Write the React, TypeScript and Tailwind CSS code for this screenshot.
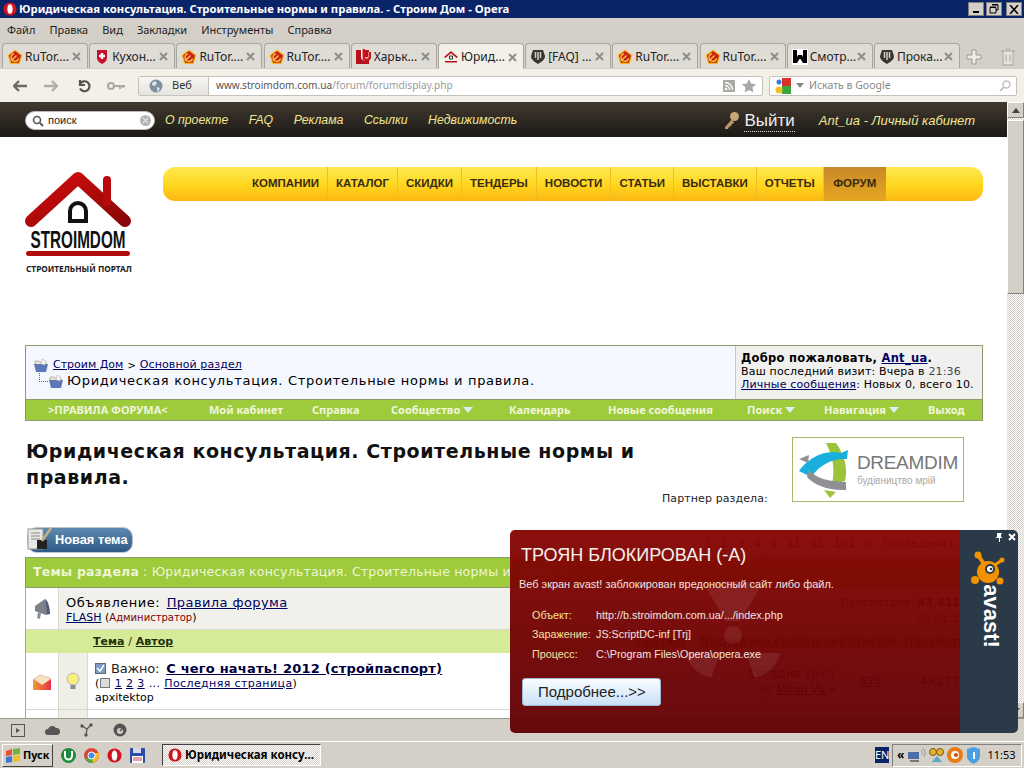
import React from "react";

const RuTor = () => (
  <svg width="16" height="16" viewBox="0 0 16 16" className="shrink-0">
    <path d="M8 .5l7.500 5.500-2.800 9H3.300L.5 6z" fill="#f2b820" />
    <path d="M8 2l6 4.500-2.200 7.200H4.200L2 6.500z" fill="#c8201a" />
    <path d="M5 11l4.500-4.500M7 4.800a3.800 3.800 0 1 0 4.500 4.700" stroke="#f6cf3a" strokeWidth="1.300" fill="none" />
  </svg>
);
const Shield = () => (
  <svg width="16" height="16" viewBox="0 0 16 16" className="shrink-0">
    <path d="M3 1h10v8c0 3-3 5-5 6-2-1-5-3-5-6z" fill="#c8102e" />
    <path d="M6.800 4h2.400v1.800H11v2.400H9.200V10H6.800V8.200H5V5.800h1.800z" fill="#fff" />
  </svg>
);
const RedU = () => (
  <svg width="16" height="16" viewBox="0 0 16 16" className="shrink-0">
    <rect x="0" y="1" width="13" height="14" fill="#b5121b" />
    <path d="M5 0h4v7c0 2 3 2 3 0V3h3v5c0 5-10 5-10 0z" fill="#fff" />
    <path d="M6.500 0h2.500v8c0 2 3 2 3.500 0V3H15v5c0 4-4 5-6 4-2-.7-2.500-2-2.500-4z" fill="#c8151f" />
  </svg>
);
const HouseFav = () => (
  <svg width="16" height="16" viewBox="0 0 16 16" className="shrink-0">
    <path d="M1 8l7-6 7 6-1.400 1L8 4.200 2.400 9z" fill="#b8141c" />
    <path d="M6.500 7h3v3h-3z" fill="none" stroke="#333" />
    <path d="M2 12h12v1.500H2z" fill="#b8141c" />
  </svg>
);
const Wot = () => (
  <svg width="16" height="16" viewBox="0 0 16 16" className="shrink-0">
    <path d="M3 1h10l2 6c0 4-4 6-7 8-3-2-7-4-7-8z" fill="#37372f" />
    <path d="M5.500 3v6M8 3v8M10.500 3v6" stroke="#cfcfc4" strokeWidth="1.500" />
  </svg>
);
const WFav = () => (
  <span className="w-4 h-4 bg-white flex items-center justify-center shrink-0">
    <svg width="14" height="13" viewBox="0 0 14 13"><path d="M0 0h4v7l1-2h4l1 2V0h4v13h-4L7.500 9h-1L4 13H0z" fill="#000" /></svg>
  </span>
);
const OperaO = ({ s = 14 }: { s?: number }) => (
  <svg width={s} height={s} viewBox="0 0 16 16" className="shrink-0">
    <ellipse cx="8" cy="8" rx="7.500" ry="7.500" fill="#d0131c" />
    <ellipse cx="8" cy="8" rx="3" ry="5.500" fill="#fff" />
  </svg>
);
const CloseX = () => (
  <svg width="9" height="9" viewBox="0 0 9 9" className="shrink-0"><path d="M1 1l7 7M8 1L1 8" stroke="#8d8d8a" strokeWidth="2" /></svg>
);
const Folder = () => (
  <svg width="16" height="15" viewBox="0 0 16 15" className="shrink-0">
    <path d="M2 3h4l1 1h6v3H2z" fill="#e8e4d0" stroke="#8a8a7a" strokeWidth=".5" />
    <path d="M1 6h14l-2 8H3z" fill="#5c78b8" />
    <path d="M9 1l4 2-1 4-4-1z" fill="#f4f4f4" stroke="#999" strokeWidth=".4" />
  </svg>
);
const Tri = () => (
  <svg width="10" height="6" viewBox="0 0 10 6" className="shrink-0"><path d="M0 0h10L5 6z" fill="#dcebf8" /></svg>
);

const tabs: [React.ReactNode, string, boolean?][] = [
  [<RuTor />, "RuTor...."],
  [<Shield />, "Кухон..."],
  [<RuTor />, "RuTor...."],
  [<RuTor />, "RuTor...."],
  [<RedU />, "Харьк..."],
  [<HouseFav />, "Юрид...", true],
  [<Wot />, "[FAQ] ..."],
  [<RuTor />, "RuTor...."],
  [<RuTor />, "RuTor...."],
  [<WFav />, "Смотр..."],
  [<Wot />, "Прока..."],
];

const uiFont = "font-['Noto_Sans','DejaVu_Sans',sans-serif]";
const verdana = "font-['DejaVu_Sans',sans-serif]";
const arial = "font-['Liberation_Sans',Arial,sans-serif]";

function TitleBar() {
  return (
    <div className={`h-[18px] bg-[#0a246a] flex items-center pl-[3px] pr-[2px] text-white font-bold ${uiFont}`}>
      <OperaO />
      <span className="ml-[2px] text-[11.300px] leading-none">Юридическая консультация. Строительные нормы и правила. - Строим Дом - Opera</span>
      <div className="ml-auto flex gap-[2px]">
        <span className="w-[16px] h-[14px] bg-[#d4d0c8] border border-[#808080] flex items-end justify-center pb-[2px]"><span className="w-[6px] h-[2px] bg-black" /></span>
        <span className="w-[16px] h-[14px] bg-[#d4d0c8] border border-[#808080] flex items-center justify-center">
          <svg width="10" height="10" viewBox="0 0 10 10"><path d="M3 1h6v5H7M1 3.500h6V9H1z" fill="none" stroke="#000" /><path d="M3 .5h6M1 3h6" stroke="#000" /></svg>
        </span>
        <span className="ml-[2px] w-[16px] h-[14px] bg-[#d4d0c8] border border-[#808080] flex items-center justify-center">
          <svg width="10" height="9" viewBox="0 0 10 9"><path d="M1 0l8 9M9 0L1 9" stroke="#000" strokeWidth="1.500" /></svg>
        </span>
      </div>
    </div>
  );
}

function MenuBar() {
  return (
    <div className={`h-[25px] bg-[#d4d0c8] flex items-center pl-[7px] gap-[14px] text-[11px] text-[#222] ${uiFont}`}>
      {["Файл", "Правка", "Вид", "Закладки", "Инструменты", "Справка"].map((m) => <span key={m}>{m}</span>)}
    </div>
  );
}

function TabStrip() {
  return (
    <div className={`h-[26px] bg-[#d4d0c8] flex items-end pl-[2px] text-[12px] text-[#222] ${uiFont}`}>
      <div className="flex gap-[1.200px]">
        {tabs.map(([ic, t, a], i) => (
          <div key={i} className={`w-[86px] flex items-center pl-[4px] pr-[6px] pt-[1px] rounded-t-[4px] border border-[#a9a69e] border-b-0 ${a ? "h-[26px] bg-[#f3f0e8]" : "h-[25px] bg-[#dfdcd5]"}`}>
            {ic}
            <span className="ml-[2px] flex-1 whitespace-nowrap overflow-hidden">{t}</span>
            <CloseX />
          </div>
        ))}
      </div>
      <svg width="18" height="18" viewBox="0 0 18 18" className="ml-[5px] mb-[3px]"><path d="M7 2h4v5h5v4h-5v5H7v-5H2V7h5z" fill="#efece5" stroke="#9d9a92" /></svg>
      <svg width="16" height="18" viewBox="0 0 16 18" className="ml-[17px] mb-[3px]"><path d="M1 3h14M3 3v14h10V3M6 1h4M6 7v7M10 7v7" fill="#e6e3dc" stroke="#a9a69e" /></svg>
    </div>
  );
}

function AddressBar() {
  return (
    <div className={`h-[33px] bg-[#f3f0e8] flex items-center text-[11px] ${uiFont}`}>
      <svg width="14" height="12" viewBox="0 0 14 12" className="ml-[13px]"><path d="M6 1L1 6l5 5M2 6h12" fill="none" stroke="#6b6b66" strokeWidth="2.400" /></svg>
      <svg width="14" height="12" viewBox="0 0 14 12" className="ml-[17px]"><path d="M8 1l5 5-5 5M12 6H0" fill="none" stroke="#b0aea8" strokeWidth="2.400" /></svg>
      <svg width="14" height="14" viewBox="0 0 14 14" className="ml-[20px]"><path d="M2 5a5 5 0 1 1 0 4.500M2 1v5h5" fill="none" stroke="#55534e" strokeWidth="2.200" /></svg>
      <svg width="18" height="10" viewBox="0 0 18 10" className="ml-[15px]"><circle cx="4" cy="5" r="3" fill="none" stroke="#aaa8a2" strokeWidth="2" /><path d="M7 5h11M13 5v3M16 5v2" stroke="#aaa8a2" strokeWidth="2" /></svg>
      <div className="ml-[13px] w-[625px] h-[20px] bg-white border border-[#c4c2bb] rounded-[2px] flex items-center">
        <div className="w-[70px] h-full bg-gradient-to-b from-[#f7f6f3] to-[#e6e4de] border-r border-[#c4c2bb] flex items-center pl-[10px] gap-[9px] text-[#333]">
          <svg width="14" height="14" viewBox="0 0 14 14"><circle cx="7" cy="7" r="6.500" fill="#7f8fa3" /><path d="M3 4l3-2 2 2-2 3-3-1zM8 8l3 1-2 4-1-2z" fill="#dfe5ea" /></svg>
          <span>Веб</span>
        </div>
        <span className="ml-[7px] text-[10.100px]"><span className="text-[#555]">www.stroimdom.com.ua</span><span className="text-[#999]">/forum/forumdisplay.php</span></span>
        <svg width="12" height="12" viewBox="0 0 12 12" className="ml-auto"><rect width="12" height="12" fill="#a8a8a4" /><circle cx="3" cy="9" r="1.300" fill="#fff" /><path d="M2 5.500a4.500 4.500 0 0 1 4.500 4.500M2 2.500A7.500 7.500 0 0 1 9.500 10" stroke="#fff" strokeWidth="1.300" fill="none" /></svg>
        <svg width="14" height="14" viewBox="0 0 14 14" className="ml-[7px] mr-[6px]"><path d="M7 0l2.100 4.600 4.900.6-3.600 3.300 1 4.900L7 11l-4.400 2.400 1-4.900L0 5.200l4.900-.6z" fill="#a8a8a4" /></svg>
      </div>
      <div className="ml-[6px] w-[248px] h-[20px] bg-white border border-[#c4c2bb] rounded-[2px] flex items-center text-[#888] text-[10.500px]">
        <svg width="16" height="16" viewBox="0 0 16 16" className="ml-[5px]"><rect x="7" y="0" width="9" height="8" fill="#d8322a" /><rect x="7" y="8" width="9" height="8" fill="#3aa63f" /><circle cx="4" cy="4" r="2.500" fill="#3b78d8" /><ellipse cx="4" cy="12" rx="3.500" ry="3.500" fill="#f3c021" /></svg>
        <svg width="8" height="5" viewBox="0 0 8 5" className="ml-[5px]"><path d="M0 0h8L4 5z" fill="#888" /></svg>
        <span className="ml-[5px]">Искать в Google</span>
        <svg width="12" height="12" viewBox="0 0 12 12" className="ml-auto mr-[5px]"><circle cx="7.500" cy="4.500" r="3.500" fill="none" stroke="#c6c4be" strokeWidth="1.500" /><path d="M5 7l-4 4" stroke="#c6c4be" strokeWidth="2" /></svg>
      </div>
    </div>
  );
}

function DarkHeader() {
  return (
    <div className={`h-[35px] pt-[2px] bg-gradient-to-b from-[#413a30] to-[#1c1916] flex items-center pl-[25px] pr-[32px] italic text-[12.300px] text-[#f2e690] ${arial}`}>
      <div className="w-[130px] h-[19px] bg-white rounded-full border border-[#bbb] flex items-center pl-[6px] not-italic text-[#222] text-[11px]">
        <svg width="12" height="12" viewBox="0 0 12 12"><circle cx="5" cy="5" r="3.500" fill="none" stroke="#555" strokeWidth="1.600" /><path d="M8 8l3 3" stroke="#555" strokeWidth="2" /></svg>
        <span className="ml-[4px]">поиск</span>
        <span className="ml-auto mr-[3px] w-[11px] h-[11px] rounded-full bg-[#b5b5b5] text-white flex items-center justify-center">
          <svg width="5" height="5" viewBox="0 0 5 5"><path d="M0 0l5 5M5 0L0 5" stroke="#fff" /></svg>
        </span>
      </div>
      <div className="ml-[10px] flex gap-[20.500px]">
        {["О проекте", "FAQ", "Реклама", "Ссылки", "Недвижимость"].map((l) => <span key={l}>{l}</span>)}
      </div>
      <svg width="17" height="19" viewBox="0 0 17 19" className="ml-auto"><circle cx="11.500" cy="5.500" r="4.500" fill="#c9a676" /><path d="M9 8l-7 8v2h3l1-2 2-1 1-2 2-1z" fill="#b8956a" /></svg>
      <span className="ml-[4px] not-italic text-[17px] text-[#eee] border-b border-dotted border-[#ddd] leading-[21px]">Выйти</span>
      <span className="ml-[24px] text-[13px]">Ant_ua - Личный кабинет</span>
    </div>
  );
}

function Logo() {
  return (
    <div className="w-[138px] pt-[35px]">
      <svg width="108" height="86" viewBox="0 0 108 86" className="block overflow-visible">
        <defs>
          <linearGradient id="roof" x1="0" x2="1" y1="0" y2="1"><stop offset="0" stopColor="#d40d0d" /><stop offset="1" stopColor="#8a0606" /></linearGradient>
        </defs>
        <path d="M6 49L53 6l47 43" fill="none" stroke="url(#roof)" strokeWidth="12" strokeLinecap="round" strokeLinejoin="round" />
        <path d="M82 30V8" stroke="#b80a0a" strokeWidth="8" strokeLinecap="round" />
        <path d="M43 51V39a10 10 0 0 1 20 0v12zM47 47h12V39a6 6 0 0 0-12 0z" fill="#111" fillRule="evenodd" />
        <text x="53" y="76" textAnchor="middle" textLength="95" lengthAdjust="spacingAndGlyphs" fontFamily="'Liberation Sans Narrow', 'Liberation Sans', sans-serif" fontWeight="700" fontSize="23" fill="#111">STROIMDOM</text>
        <rect x="1" y="79" width="104" height="5" rx="2.500" fill="#b10c0c" />
      </svg>
      <div className={`ml-[1px] mt-[5px] w-[106px] text-[8.300px] font-bold leading-[11px] text-[#222] whitespace-nowrap ${uiFont}`}>СТРОИТЕЛЬНЫЙ ПОРТАЛ</div>
    </div>
  );
}

function YellowNav() {
  const items = ["КОМПАНИИ", "КАТАЛОГ", "СКИДКИ", "ТЕНДЕРЫ", "НОВОСТИ", "СТАТЬИ", "ВЫСТАВКИ", "ОТЧЕТЫ"];
  return (
    <div className={`flex-1 mt-[30px] h-[34px] rounded-[12px] bg-gradient-to-b from-[#ffe94f] via-[#ffd81f] to-[#fcb714] flex pl-[81px] text-[11.500px] font-bold text-[#3b2a10] ${arial}`}>
      {items.map((t) => (
        <span key={t} className="px-[8px] flex items-center border-r border-[#f2bd1f]">{t}</span>
      ))}
      <span className="w-[62px] flex items-center justify-center bg-gradient-to-b from-[#c8882a] to-[#e6a81f]">ФОРУМ</span>
    </div>
  );
}

function Breadcrumb() {
  const links: [string, string, boolean?][] = [
    [">ПРАВИЛА ФОРУМА<", "w-[161px]"],
    ["Мой кабинет", "w-[103px]"],
    ["Справка", "w-[79px]"],
    ["Сообщество", "w-[118px]", true],
    ["Календарь", "w-[99px]"],
    ["Новые сообщения", "w-[139px]"],
    ["Поиск", "w-[77px]", true],
    ["Навигация", "w-[104px]", true],
    ["Выход", "w-[40px]"],
  ];
  return (
    <div className={`border border-[#8d9a6e] ${verdana} text-[11px] text-black`}>
      <div className="h-[53px] flex">
        <div className="flex-1 bg-[#f5f7ff] pt-[12px] pl-[7px]">
          <div className="flex items-center h-[14px]">
            <Folder />
            <span className="ml-[4px] underline text-[#000060]">Строим Дом</span>
            <span className="mx-[4px] text-[10px]">&gt;</span>
            <span className="underline text-[#000060] tracking-[.1px]">Основной раздел</span>
          </div>
          <div className="flex items-center h-[16px] ml-[6px] mt-[1px]">
            <span className="w-[9px] h-[9px] -mt-[8px] border-l border-b border-dotted border-[#666]" />
            <Folder />
            <span className="ml-[3px] text-[13px] tracking-[.7px] font-medium">Юридическая консультация. Строительные нормы и правила.</span>
          </div>
        </div>
        <div className="w-[247px] bg-[#f0f0ee] border-l border-[#c8c8c0] pl-[5px] pt-[6px] leading-[13px] tracking-[.17px]">
          <div className="font-bold text-[11.500px] tracking-[.3px] whitespace-nowrap">Добро пожаловать, <span className="underline text-[#000060]">Ant_ua</span>.</div>
          <div className="whitespace-nowrap">Ваш последний визит: Вчера в <span className="text-[#445]">21:36</span></div>
          <div className="whitespace-nowrap"><span className="underline text-[#000060]">Личные сообщения</span>: Новых 0, всего 10.</div>
        </div>
      </div>
      <div className={`h-[21px] bg-[#9ecb3c] border-t border-[#8d9a6e] flex items-center pl-[22px] text-[11px] font-bold text-[#f0f6dc] ${uiFont}`}>
        {links.map(([t, w, d]) => (
          <span key={t} className={`${w} shrink-0 flex items-center gap-[3px] whitespace-nowrap`}>{t}{d && <Tri />}</span>
        ))}
      </div>
    </div>
  );
}

function Partner() {
  return (
    <div className="flex h-[107px] pt-[16px]">
      <h1 className={`w-[636px] ml-[1px] mt-[1px] text-[19px] font-bold leading-[26px] tracking-[.57px] text-[#111] ${verdana}`}>
        Юридическая консультация. Строительные нормы и правила.
      </h1>
      <div className={`self-start mt-[54px] text-[11px] tracking-[.1px] text-[#222] whitespace-nowrap ${verdana}`}>Партнер раздела:</div>
      <div className="ml-[24px] w-[172px] h-[65px] border border-[#a8b868] flex items-center pl-[6px]">
        <svg width="50" height="58" viewBox="0 0 50 58" className="shrink-0">
          <path d="M27 2l10 0c9 13 12 26 9 38l-13 3c3-15 1-28-6-41z" fill="#9cc43a" />
          <path d="M49 9l-1 9C36 17 22 22 12 36L0 30C8 18 25 8 42 12z" fill="#1ab0dd" />
          <path d="M10 29c8 9 18 11 37 12v8C30 50 15 44 8 36z" fill="#8f8f96" />
          <path d="M0 18l10-4-1 8z" fill="#8f8f96" />
          <path d="M25 49l12 2-6 6z" fill="#9cc43a" />
        </svg>
        <div className={`ml-[8px] ${arial}`}>
          <div className="text-[19px] leading-[22px] text-[#777] tracking-[-.3px]">DREAMDIM</div>
          <div className="text-[10px] leading-[13px] text-[#aaa]">будівництво мрій</div>
        </div>
      </div>
    </div>
  );
}

function ActionRow() {
  return (
    <div className={`h-[29px] flex ${verdana}`}>
      <div className={`ml-[2px] mt-[-1px] w-[106px] h-[26px] rounded-[10px] bg-gradient-to-b from-[#5e8ab0] to-[#2d5a85] border border-[#b8c4cc] flex items-center pl-[27px] text-[12.800px] font-bold text-white relative ${arial}`}>
        <svg width="28" height="28" viewBox="0 0 28 28" className="absolute -left-[2px] -top-[2px]"><rect x="2" y="3" width="15" height="20" fill="#e8e8e4" stroke="#999" /><path d="M5 7h9M5 10h9M5 13h9" stroke="#888" /><rect x="11" y="14" width="10" height="9" fill="#222" /><path d="M16 15L25 2" stroke="#c8b080" strokeWidth="2.500" /></svg>
        Новая тема
      </div>
      <div className="ml-auto mt-[8px] mr-[27px] flex gap-[9.500px] text-[11px] text-black whitespace-nowrap">
        <span>1</span><span>2</span><span>3</span><span>4</span><span>5</span><span>11</span><span>51</span><span>101</span><span>&gt;</span><span>Последняя »</span>
      </div>
    </div>
  );
}

function ThreadTable() {
  return (
    <div className={`border-x border-[#a8a8a0] ${verdana} text-[11px] text-black`}>
      <div className="h-[31px] bg-[#9ecb3c] border border-[#8d9a6e] -mx-[1px] flex items-center pl-[7px] text-[12.500px] text-[#eef6d8] tracking-[.2px] whitespace-nowrap overflow-hidden">
        <b>Темы раздела</b><span className="ml-[4px]">: Юридическая консультация. Строительные нормы и правила.</span>
      </div>
      <div className="h-[42px] flex border-b border-[#d8d8d0]">
        <div className="w-[33px] bg-white border-r border-[#d8d8d0] flex items-center justify-center">
          <svg width="18" height="22" viewBox="0 0 18 22"><path d="M12 1l5 15-4 1-8-3-3-1 0-5z" fill="#7c8088" /><path d="M12 1c3 1 5 9 5 15l-3 0c0-5-1-11-2-15z" fill="#4a5a80" /><path d="M5 14l-1 6 3 1 1-6z" fill="#8c909a" /></svg>
        </div>
        <div className="flex-1 bg-[#f1f1ec] pl-[7px] pt-[7px] pr-[22px] flex">
          <div>
            <div className="text-[13px] leading-[16px]"><span className="font-medium tracking-[.5px]">Объявление</span>: <span className="ml-[3px] tracking-[.4px] underline text-[#000060]">Правила форума</span></div>
            <div className="text-[11px] leading-[14px]"><span className="underline text-[#000060]">FLASH</span> (<span className="text-[#800000] text-[10px]">Администратор</span>)</div>
          </div>
          <div className="ml-auto text-right leading-[16px] whitespace-nowrap">
            <div>Просмотров: <b>83,411</b></div>
            <div className="-mr-[20px]">20.01.2012</div>
          </div>
        </div>
      </div>
      <div className="h-[23px] pt-[2px] bg-[#d6eb98] flex items-center pl-[67px] font-bold text-[#22300a] text-[11px]">
        <span><span className="underline">Тема</span> <span className="font-normal">/</span> <span className="underline">Автор</span></span>
        <span className="ml-auto w-[64px] underline">Рейтинг</span>
        <span className="underline w-[146px] whitespace-nowrap overflow-hidden">Последнее сообщение</span>
        <span className="underline w-[58px]">Ответов</span>
        <span className="underline w-[78px] whitespace-nowrap overflow-hidden">Просмотров</span>
      </div>
      <div className="h-[57px] flex border-b border-[#d8d8d0]">
        <div className="w-[33px] bg-white border-r border-[#d8d8d0] flex items-center justify-center">
          <svg width="20" height="20" viewBox="0 0 20 20"><path d="M2 8l6-4 10 3-1 5-6 3z" fill="#f6e4c0" stroke="#b88" strokeWidth=".5" /><path d="M1 8l9 6 9-6v11H1z" fill="url(#env)" /><defs><linearGradient id="env" x1="0" x2="1"><stop offset="0" stopColor="#f29a30" /><stop offset="1" stopColor="#e8304a" /></linearGradient></defs></svg>
        </div>
        <div className="w-[29px] bg-[#efefe8] border-r border-[#d8d8d0] flex items-center justify-center">
          <svg width="14" height="18" viewBox="0 0 14 18"><circle cx="7" cy="7" r="6" fill="#f7ee7c" stroke="#b4b4c0" /><rect x="4.500" y="13" width="5" height="4" fill="#8d8d90" /></svg>
        </div>
        <div className="flex-1 bg-white pl-[7px] pt-[7px] flex">
          <div>
            <div className="text-[13px] leading-[17px] flex items-center whitespace-nowrap tracking-[.2px]">
              <span className="w-[11px] h-[11px] bg-[#7e9cc8] border border-[#667] flex items-center justify-center"><svg width="9" height="9" viewBox="0 0 9 9"><path d="M1 4l3 3 4-6" fill="none" stroke="#fff" strokeWidth="1.500" /></svg></span>
              <span className="ml-[5px] text-[#222] tracking-[-.2px]">Важно:</span>
              <b className="ml-[7px] underline text-[#000040]">С чего начать! 2012 (стройпаспорт)</b>
            </div>
            <div className="leading-[14px] whitespace-nowrap tracking-[.4px]">(<span className="inline-block w-[10px] h-[10px] border border-[#777] bg-[#ddd] align-[-1px] mr-[5px]" /><span className="underline text-[#000060]">1</span> <span className="underline text-[#000060]">2</span> <span className="underline text-[#000060]">3</span> ... <span className="underline text-[#000060]">Последняя страница</span>)</div>
            <div className="leading-[14px]">apxitektop</div>
          </div>
          <div className="ml-auto mt-[7px] text-right leading-[15px] mr-[146px] whitespace-nowrap"><div><span className="text-[12px]">Сегодня</span> <span className="text-[#445]">10:01</span></div><div>от <span className="underline">Miron VV</span> »</div></div>
          <span className="absolute left-[860px] mt-[14px] underline">670</span>
          <span className="absolute left-[920px] mt-[14px]">49,277</span>
        </div>
      </div>
      <div className="h-[40px] flex">
        <div className="w-[33px] bg-white border-r border-[#d8d8d0]" />
        <div className="w-[29px] bg-[#efefe8] border-r border-[#d8d8d0]" />
        <div className="flex-1 bg-white" />
      </div>
    </div>
  );
}

function Scrollbar() {
  return (
    <div className="w-[17px] h-full flex flex-col bg-[repeating-conic-gradient(#d4d0c8_0_25%,#ffffff_0_50%)] bg-[length:2px_2px]">
      <div className="h-[16px] bg-[#d4d0c8] border border-t-white border-l-white border-r-[#808080] border-b-[#808080] flex items-center justify-center">
        <svg width="8" height="5" viewBox="0 0 8 5"><path d="M0 5h8L4 0z" fill="#444" /></svg>
      </div>
      <div className="h-[174px] mt-[2px] bg-[#d4d0c8] border border-t-white border-l-white border-r-[#808080] border-b-[#808080]" />
      <div className="mt-auto h-[16px] bg-[#d4d0c8] border border-t-white border-l-white border-r-[#808080] border-b-[#808080] flex items-center justify-center">
        <svg width="8" height="5" viewBox="0 0 8 5"><path d="M0 0h8L4 5z" fill="#444" /></svg>
      </div>
    </div>
  );
}

function Page() {
  return (
    <div className="flex h-[616px] overflow-hidden">
      <div className="w-[1007px] bg-white overflow-hidden relative">
        <DarkHeader />
        <div className="pl-[25px] pr-[24px]">
          <div className="flex h-[208px]">
            <Logo />
            <YellowNav />
          </div>
          <Breadcrumb />
          <Partner />
          <ActionRow />
          <ThreadTable />
        </div>
      </div>
      <Scrollbar />
    </div>
  );
}

function StatusBar() {
  return (
    <div className="h-[23px] bg-[#d4d0c8] border-t border-[#9a978f] flex items-center pl-[11px] gap-[20px]">
      <svg width="14" height="13" viewBox="0 0 14 13"><rect x=".5" y=".5" width="13" height="12" fill="none" stroke="#555" /><path d="M5 4l4 2.500L5 9z" fill="#555" /></svg>
      <svg width="15" height="10" viewBox="0 0 15 10"><path d="M3 10a3 3 0 0 1 0-6 4.500 4.500 0 0 1 8-1 3.500 3.500 0 0 1 1 7z" fill="#555" /></svg>
      <svg width="13" height="14" viewBox="0 0 13 14"><circle cx="2" cy="3" r="1.700" fill="#555" /><circle cx="11" cy="2" r="1.700" fill="#555" /><circle cx="6" cy="12" r="1.700" fill="#555" /><path d="M2 3l5 3 4-4M7 6l-1 6" stroke="#555" strokeWidth="1.300" fill="none" /></svg>
      <svg width="14" height="14" viewBox="0 0 14 14"><circle cx="7" cy="7" r="6.500" fill="#555" /><circle cx="7" cy="8" r="3" fill="#d4d0c8" /><path d="M7 8l4-5" stroke="#555" strokeWidth="1.500" /></svg>
    </div>
  );
}

const raised = "border border-t-white border-l-white border-r-[#404040] border-b-[#404040]";

function Taskbar() {
  return (
    <div className={`h-[27px] bg-[#d4d0c8] border-t border-white flex items-center pl-[2px] pr-[2px] text-[12px] text-black ${uiFont}`}>
      <div className={`w-[51px] h-[23px] flex items-center pl-[2px] gap-[2px] font-bold text-[10.800px] ${raised}`}>
        <svg width="16" height="15" viewBox="0 0 16 15" className="shrink-0"><path d="M1 3l6-2v6l-6 1z" fill="#e8532a" /><path d="M8 1l7-1v6l-7 1z" fill="#74b53c" /><path d="M1 9l6-1v6l-6 1z" fill="#4176cf" /><path d="M8 8l7-1v6l-7 1z" fill="#f3c021" /></svg>
        Пуск
      </div>
      <div className="ml-[8px] flex gap-[8px] items-center">
        <svg width="15" height="15" viewBox="0 0 15 15"><circle cx="7.500" cy="7.500" r="7.500" fill="#1d8a3c" /><path d="M4 3v5a3.500 3.500 0 0 0 7 0V3" fill="none" stroke="#fff" strokeWidth="2" /></svg>
        <svg width="15" height="15" viewBox="0 0 15 15"><circle cx="7.500" cy="7.500" r="7.500" fill="#dc4437" /><path d="M1 11l6-4 7-2v4l-4 6H5z" fill="#57a843" /><path d="M7.500 5H15c0 5-2 8-6 10z" fill="#f7c21f" /><circle cx="7.500" cy="7.500" r="3.500" fill="#4a8ae8" stroke="#fff" /></svg>
        <OperaO s={15} />
        <svg width="15" height="15" viewBox="0 0 15 15"><rect width="15" height="15" rx="1" fill="#2d4ca8" /><rect x="3" y="0" width="8" height="5" fill="#d8d8e8" /><rect x="2" y="8" width="11" height="7" fill="#fff" /><path d="M3 10h9M3 12h9" stroke="#d04050" /></svg>
      </div>
      <div className="ml-[17px] w-[159px] h-[22px] border border-t-[#404040] border-l-[#404040] border-r-white border-b-white bg-[repeating-conic-gradient(#d4d0c8_0_25%,#ffffff_0_50%)] bg-[length:2px_2px] flex items-center pl-[5px] gap-[3px] font-bold text-[11.500px]">
        <OperaO />
        <span className="whitespace-nowrap">Юридическая консу...</span>
      </div>
      <div className="ml-auto w-[14px] h-[16px] bg-[#0a246a] text-white text-[11px] leading-[16px] overflow-hidden flex items-center">EN</div>
      <div className="ml-[3px] w-[130px] h-[23px] border border-t-[#808080] border-l-[#808080] border-r-white border-b-white flex items-center pl-[4px] text-[11px]">
        <span className="font-bold text-[12px]">«</span>
        <svg width="20" height="16" viewBox="0 0 20 16" className="ml-[3px]"><rect x="1" y="5" width="11" height="7" fill="#4c6ea8" /><rect x="3" y="13" width="9" height="2" fill="#777" /><path d="M14 3a4 4 0 0 1 1 5M16 1a7 7 0 0 1 1 9" stroke="#999" fill="none" /></svg>
        <svg width="16" height="17" viewBox="0 0 16 17" className="ml-[2px]"><circle cx="4" cy="5" r="3.500" fill="#e8b030" stroke="#7a5a10" /><circle cx="11" cy="5" r="3.500" fill="#e8b030" stroke="#7a5a10" /><path d="M3 15l5-6 5 6z" fill="#55a8c8" /></svg>
        <svg width="16" height="16" viewBox="0 0 16 16" className="ml-[2px]"><circle cx="8" cy="8" r="8" fill="#e87a18" /><circle cx="8" cy="8" r="4" fill="#fff" /><circle cx="9" cy="8" r="2" fill="#d04a10" /></svg>
        <svg width="15" height="17" viewBox="0 0 15 17" className="ml-[3px]"><path d="M1 2l6.500-2L14 2v7c0 4-3 6-6.500 8C4 15 1 13 1 9z" fill="#4aa0e0" /><path d="M7 5h2v7H7z" fill="#fff" /></svg>
        <span className="ml-[6px]">11:53</span>
      </div>
    </div>
  );
}

function Avast() {
  const rows = [["Объект:", "http://b.stroimdom.com.ua/.../index.php"], ["Заражение:", "JS:ScriptDC-inf [Trj]"], ["Процесс:", "C:\\Program Files\\Opera\\opera.exe"]];
  return (
    <div className={`absolute left-[510px] top-[530px] w-[508px] h-[203px] rounded-[5px] overflow-hidden flex ${arial}`}>
      <div className="flex-1 relative bg-gradient-to-b from-[#860602]/[.96] to-[#610105]/[.96] pl-[11px] text-white">
        <svg width="110" height="110" viewBox="0 0 110 110" className="absolute left-[168px] top-[50px] opacity-[.08]">
          <circle cx="55" cy="55" r="9" fill="#fff" />
          <path d="M27 6q28-10 56 0L62 41H48zM8 73h34l-9 25Q12 92 8 73zM102 73H68l9 25q21-6 25-25z" fill="#fff" />
        </svg>
        <div className="relative text-[18px] leading-[22px] mt-[14px] text-[#f6f0ee]">ТРОЯН БЛОКИРОВАН (-А)</div>
        <div className="relative ml-[-2px] mt-[11px] text-[10.950px] leading-[14px] text-[#f0e4e0]">Веб экран avast! заблокирован вредоносный сайт либо файл.</div>
        <div className="relative mt-[17px] ml-[11px] text-[10.800px] flex flex-col gap-[5.500px]">
          {rows.map(([k, v]) => (
            <div key={k} className="flex h-[14px] items-center">
              <span className="w-[64px] text-[#f5e3a0]">{k}</span>
              <span className="text-[#f0e4e0] whitespace-nowrap">{v}</span>
            </div>
          ))}
        </div>
        <div className="relative mt-[17px] ml-[1px] w-[139px] h-[28px] rounded-[3px] bg-gradient-to-b from-[#fbfdff] to-[#c8e0f6] border border-[#9cb8d8] flex items-center pl-[15px] text-[15px] text-[#222]">Подробнее...&gt;&gt;</div>
      </div>
      <div className="w-[58px] bg-[#2b3a48] relative flex flex-col items-center text-white">
        <div className="w-full flex justify-end gap-[4px] pr-[2px] pt-[2px]">
          <svg width="10" height="10" viewBox="0 0 10 10"><path d="M3 1h5L7 3v2l2 1H6v4H5V6H1l2-1z" fill="#fff" /></svg>
          <svg width="8" height="8" viewBox="0 0 8 8" className="mt-[1px]"><path d="M1 1l6 6M7 1L1 7" stroke="#fff" strokeWidth="2" /></svg>
        </div>
        <svg width="36" height="36" viewBox="0 0 34 36" className="mt-[9px] ml-[-3px]">
          <circle cx="17" cy="21" r="11" fill="#f39200" />
          <circle cx="7" cy="4" r="3.500" fill="#f39200" /><path d="M7 4l8 12" stroke="#f39200" strokeWidth="4" />
          <circle cx="31" cy="9" r="2.500" fill="#f39200" /><path d="M31 9l-10 7" stroke="#f39200" strokeWidth="3" />
          <circle cx="4" cy="29" r="4" fill="#f39200" /><circle cx="29" cy="30" r="3.500" fill="#f39200" />
          <circle cx="19" cy="18" r="5" fill="#2b3a48" /><circle cx="19" cy="18" r="3" fill="#fff" /><circle cx="20" cy="18" r="1.300" fill="#2b3a48" />
        </svg>
        <div className="mt-[-2px] h-[62px] w-full flex items-center justify-center pl-[4px]">
          <span className="rotate-90 font-bold text-[22px] leading-none whitespace-nowrap">avast!</span>
        </div>
      </div>
    </div>
  );
}

export default function App() {
  return (
    <div className="relative w-[1024px] h-[768px] overflow-hidden bg-[#d4d0c8]">
      <TitleBar />
      <MenuBar />
      <TabStrip />
      <AddressBar />
      <Page />
      <StatusBar />
      <Taskbar />
      <Avast />
    </div>
  );
}
